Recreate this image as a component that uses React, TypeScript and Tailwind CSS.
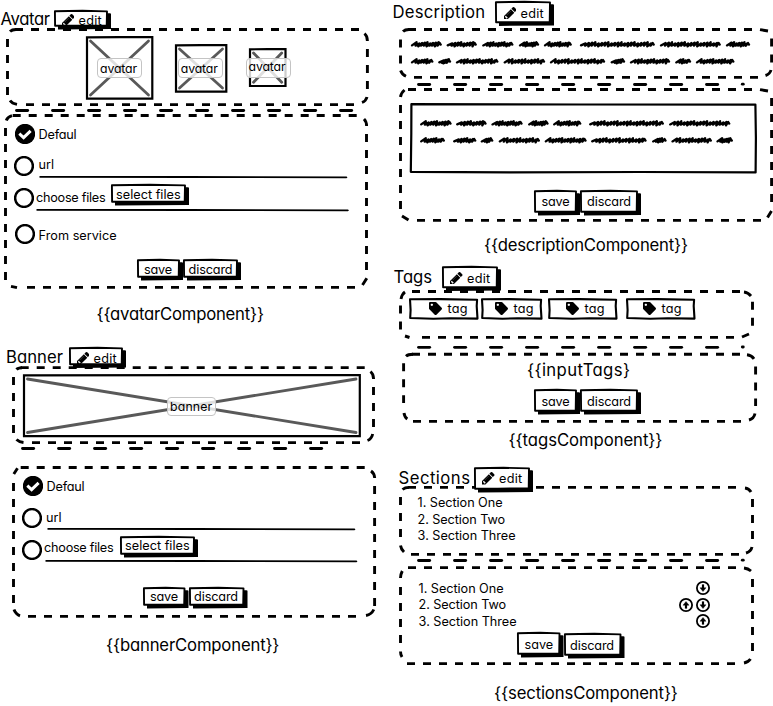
import { useLayoutEffect, useRef, type ReactNode } from "react";
import { FaTag } from "react-icons/fa";

type Seg = [number, number];
type FrameShape = {
  l: number; t: number; r: number; b: number;
  top: Seg; right: Seg; bottom: Seg; left: Seg;
  corners: string;
};

/* Text spread evenly over the width its class gives it. */
function Label({ children, className }: { children: string; className: string }) {
  const box = useRef<HTMLSpanElement>(null);
  const ink = useRef<HTMLSpanElement>(null);
  useLayoutEffect(() => {
    if (!box.current || !ink.current) return;
    ink.current.style.letterSpacing = "0px";
    const room = box.current.getBoundingClientRect().width;
    const natural = ink.current.getBoundingClientRect().width;
    ink.current.style.letterSpacing = `${(room - natural + 1) / Math.max(1, children.length - 1)}px`;
  }, [children]);
  return (
    <span ref={box} className={`block shrink-0 whitespace-nowrap ${className}`}>
      <span ref={ink}>{children}</span>
    </span>
  );
}

const SMALL = "h-[12px] text-[12.7px] leading-[13.2px] -indent-[0.4px]";
const CHIP = "h-[12px] text-[12.3px] leading-[13px] -indent-[0.4px]";
const BIG = "h-[16px] text-[16.7px] leading-[16px] -indent-[1px]";

/* Dashed hand-drawn frame behind a panel. */
function Panel({ x, y, shape, className, children }: { x: number; y: number; shape: FrameShape; className: string; children: ReactNode }) {
  const s = shape;
  return (
    <section className={`relative shrink-0 ${className}`}>
      <svg className="pointer-events-none absolute inset-0 h-full w-full overflow-visible" fill="none" stroke="#000" strokeWidth="2.9">
        <g transform={`translate(${-x} ${-y})`}>
          <g strokeDasharray="8 8">
            <path d={`M${s.top[0]} ${s.t}H${s.top[1]}`} />
            <path d={`M${s.bottom[0]} ${s.b}H${s.bottom[1]}`} />
            <path d={`M${s.l} ${s.left[0]}V${s.left[1]}`} />
            <path d={`M${s.r} ${s.right[0]}V${s.right[1]}`} />
          </g>
          <path d={s.corners} />
        </g>
      </svg>
      {children}
    </section>
  );
}

function Divider({ start, count, y, dot, className }: { start: number; count: number; y: number; dot?: boolean; className: string }) {
  return (
    <svg className={`block w-full shrink-0 overflow-visible ${className}`} stroke="#000" strokeWidth="2.8" strokeLinecap="round">
      {Array.from({ length: count }, (_, i) => (
        <path key={i} d={`M${start + 1.5 + i * 36} ${y}h11.2`} />
      ))}
      {dot && <path d={`M${start + 325.3} ${y - 0.3}h1`} />}
    </svg>
  );
}

function Button({ w, h, className, children }: { w: number; h: number; className: string; children: ReactNode }) {
  return (
    <button className={`relative flex shrink-0 items-start ${className}`}>
      <svg className="absolute inset-0 h-full w-full overflow-visible">
        <path d={`M3.8 3.2H${w - 1}l1 .6V${h}L4 ${h + 0.4}z`} />
        <path d={`M.9 1.2L${w * 0.5} .8L${w - 4} 1.4L${w - 4.3} ${h - 3.6}L${w * 0.4} ${h - 3.4}L1.1 ${h - 3.2}z`} fill="#fff" stroke="#000" strokeWidth="1.9" strokeLinejoin="round" />
      </svg>
      {children}
    </button>
  );
}

function EditButton({ w, h, className }: { w: number; h: number; className: string }) {
  return (
    <Button w={w} h={h} className={className}>
      <svg viewBox="128 149 1515 1515" className="relative size-[12.5px] shrink-0">
        <path d="M491 1536l91-91-235-235-91 91v107h128v128h107zM960 416l416 416-832 832h-416v-416zM1643 512q0 53-37 90l-166 166-416-416 166-165q36-38 90-38 53 0 91 38l235 234q37 39 37 91z" />
        <path d="M440 1140L960 620" stroke="#8a8a8a" strokeWidth="50" />
      </svg>
      <Label className={`${SMALL} relative ml-[5px] w-[22px]`}>edit</Label>
    </Button>
  );
}

function Radio({ checked, className }: { checked?: boolean; className: string }) {
  return (
    <svg viewBox="0 0 20 20" className={`size-[20px] shrink-0 ${className}`} fill="none">
      {checked ? (
        <>
          <circle cx="10" cy="10" r="10.2" fill="#000" />
          <path d="M4.3 9.7L8.6 13.6L15.6 6.8" stroke="#fff" strokeWidth="3" />
        </>
      ) : (
        <circle cx="10" cy="10" r="8.9" stroke="#000" strokeWidth="2.5" />
      )}
    </svg>
  );
}

function Rule({ className }: { className: string }) {
  return (
    <svg className={`block h-[2px] w-full shrink-0 overflow-visible ${className}`} viewBox="0 0 310 2" preserveAspectRatio="none">
      <path d="M.5 .1L150 0L309 .4L310 1.3L309 2.2L150 1.9L.5 1.7z" />
    </svg>
  );
}

function ImageBox({ w, h, className, chip, text, children }: { w: number; h: number; className: string; chip: string; text: string; children: string }) {
  return (
    <div className={`relative shrink-0 ${className}`}>
      <svg className="absolute inset-0 h-full w-full overflow-visible" fill="none">
        <path d={`M4.5 5L${w - 5} ${h - 5}M${w - 5} 5L4.5 ${h - 5}`} stroke="#595959" strokeWidth="2.8" strokeLinecap="round" />
        <path d={`M1 1.3L${w * 0.5} 1.1L${w - 1.2} 1V${h - 1.3}H1z`} stroke="#000" strokeWidth="2.2" />
      </svg>
      <div className={`absolute flex rounded-[4px] border border-[#c4c4c4] bg-white/80 ${chip}`}>
        <Label className={`${CHIP} ${text}`}>{children}</Label>
      </div>
    </div>
  );
}

/* Scribbled words standing for body copy. */
function Scribble({ x, words, className }: { x: number; words: Seg[]; className: string }) {
  const path = words
    .map(([a, b], k) => {
      const n = Math.max(3, Math.round((b - a) / 3.6));
      const step = (b - a - 6) / n;
      let d = `M${a - x + 1} 5.4`;
      for (let i = 0; i < n; i++) {
        const px = a - x + 1 + i * step;
        const lift = ((i * 7 + k * 3) % 4) * 0.4;
        d += `L${px + 4.6} ${2.2 + lift}L${px + step + 0.8} ${5.7 + (i % 3 === 1 ? 0.7 : 0)}`;
      }
      return d + `L${b - x - 2} 3L${b - x - 1} 4.6`;
    })
    .join("");
  return (
    <svg className={`block h-[8px] w-full shrink-0 overflow-visible ${className}`} fill="none" stroke="#000" strokeWidth="2.3" strokeLinejoin="round" strokeLinecap="round">
      <path d={path} />
    </svg>
  );
}

function ArrowCircle({ up }: { up?: boolean }) {
  return (
    <svg viewBox="0 0 14 14" className="-mt-[0.6px] size-[14px]" fill="none" stroke="#000">
      <circle cx="7" cy="7" r="6.1" strokeWidth="1.8" />
      <g transform={up ? "rotate(180 7 7)" : undefined}>
        <path d="M7 3.4V8" strokeWidth="2.2" />
        <path d="M4 6.8H10L7 10.5z" fill="#000" strokeWidth="0.4" />
      </g>
    </svg>
  );
}

function TagBox({ w, className }: { w: number; className: string }) {
  return (
    <div className={`relative flex h-[22px] shrink-0 items-start pt-[4.5px] ${className}`}>
      <svg className="absolute inset-0 h-full w-full overflow-visible" fill="none" stroke="#000" strokeWidth="2.1" strokeLinejoin="round">
        <path d={`M1 1.2L${w * 0.45} 1.1L${w - 1.4} 1.8L${w - 1.8} 8L${w - 1} 20.6L${w * 0.6} 20.2L${w * 0.35} 20.7L1.2 20L1.6 12z`} />
      </svg>
      <FaTag className="size-[13px] shrink-0" />
      <Label className={`${SMALL} ml-[6px] w-[19px]`}>tag</Label>
    </div>
  );
}

const avatarView: FrameShape = { l: 7.5, t: 29.5, r: 367.4, b: 104.6, top: [15, 359], right: [49, 90], bottom: [26, 354], left: [39, 95], corners: "M10 31.5Q12 29.5 16 29.5M364.5 33.5Q367.4 36 367.4 41M10 100.5Q12 103.5 17 104.4M362 102.5Q366 101 367 97" };
const avatarForm: FrameShape = { l: 5.5, t: 115.5, r: 366.5, b: 287.4, top: [12.7, 357], right: [134, 270], bottom: [27, 355], left: [128, 280], corners: "M6.3 120.5Q7.5 117 12 115.7M364 119Q366.5 121.5 366.6 126M11 286.3L17 287.6M362.5 285L366.8 278.3" };
const bannerView: FrameShape = { l: 13.5, t: 367.6, r: 373.5, b: 442.6, top: [20.7, 365], right: [387, 427], bottom: [32, 360], left: [377, 433], corners: "M16.5 369.5Q18 367.8 22 367.7M370.5 371.5Q373.5 374 373.6 379M16.5 439.5Q19 442 23.5 442.5M367.5 440.5Q371.5 439 372.7 434" };
const bannerForm: FrameShape = { l: 13.5, t: 467.5, r: 374.6, b: 616.4, top: [20.7, 365], right: [486, 606], bottom: [28, 364], left: [483, 603], corners: "M13.8 474L17.5 468.3M371 471Q374.5 473.5 374.7 478M14 609.5Q15.5 614 20 615.8M366 615.5Q371.5 614.5 373.8 609.5" };
const descView: FrameShape = { l: 400.5, t: 29.5, r: 771.6, b: 77.4, top: [408, 752], right: [38.5, 63], bottom: [414, 758], left: [39.5, 63.5], corners: "M403 31.5Q405 29.5 409 29.5M760 29.6L768 31M400.6 70.5Q402 74.5 406 76.3M765.5 75.5Q770 74 771 70" };
const descForm: FrameShape = { l: 400.5, t: 89.5, r: 771.6, b: 220.4, top: [408, 752], right: [98, 202], bottom: [417, 761], left: [105, 209], corners: "M400.5 97Q401 93 404.5 90M760 89.6L768 91M402 216L408.5 220M767.5 217.5L771.5 211" };
const tagView: FrameShape = { l: 400.5, t: 291.5, r: 752.5, b: 337.4, top: [412, 740], right: [301.7, 326], bottom: [422, 734], left: [305.5, 330], corners: "M401 299Q402 294 405 292M744 292Q748 292.5 751 296M405 336L409.5 337.5M742 337L749 334" };
const tagForm: FrameShape = { l: 403.6, t: 354.3, r: 755.6, b: 421.4, top: [412, 740], right: [366.5, 406], bottom: [413, 741], left: [363.3, 403], corners: "M406 356.2Q408 354.3 413 354.3M747 354.8Q751.5 355.3 754 358.8M404 413Q404.5 417 407.3 419M749 420Q754 418.5 755 413.5" };
const sectionView: FrameShape = { l: 400.5, t: 487.4, r: 752.5, b: 554.4, top: [408, 736], right: [499, 539], bottom: [411, 739], left: [497, 537], corners: "M402.5 489.5Q405 487.4 409 487.4M745 488Q749 488.5 751 492M400.5 545.5Q401 549 404 552M746 553Q751 551.5 752 547" };
const sectionForm: FrameShape = { l: 400.5, t: 567.6, r: 752.5, b: 663.6, top: [408, 736], right: [579, 651], bottom: [407, 735], left: [587, 643], corners: "M400.5 578Q400.7 574 402.3 571M744 568Q748 568.5 751 571M400.5 651.5Q400.5 654.5 402 657M744 663Q748.5 662 750.5 659" };

export default function App() {
  return (
    <main className="flex h-[706px] w-[773px] overflow-hidden bg-white font-['Inter','Noto_Sans',sans-serif] text-black [font-feature-settings:'cv11','calt'_0]">
      <div className="flex w-[390px] shrink-0 flex-col">
        <header className="relative z-10 flex h-[28px] shrink-0 items-start">
          <Label className={`${BIG} mt-[11px] ml-[1.5px] w-[48.5px]`}>Avatar</Label>
          <EditButton w={57} h={19} className="mt-[10px] ml-[4px] h-[19px] w-[57px] pt-[3.5px] pl-[7.5px]" />
        </header>
        <Panel x={0} y={28} shape={avatarView} className="h-[78px]">
          <div className="flex items-start">
            <ImageBox w={67.5} h={64} className="mt-[8px] ml-[85.5px] h-[64px] w-[67.5px]" chip="top-[22px] left-[11.5px] h-[20px] w-[45px]" text="mt-[2.5px] ml-[2.5px] w-[36px]">avatar</ImageBox>
            <ImageBox w={52.5} h={49} className="mt-[15.5px] ml-[21.5px] h-[49px] w-[52.5px]" chip="top-[14.5px] left-[3.2px] h-[20px] w-[45px]" text="mt-[2.5px] ml-[2.5px] w-[36px]">avatar</ImageBox>
            <ImageBox w={37.7} h={39.3} className="mt-[19.7px] ml-[22.3px] h-[39.3px] w-[37.7px]" chip="top-[10.3px] -left-[3.8px] h-[20px] w-[45px]" text="mt-[1.5px] ml-[2.5px] w-[36px]">avatar</ImageBox>
          </div>
        </Panel>
        <Divider start={15} count={10} y={4.5} className="h-[8px]" />
        <Panel x={0} y={114} shape={avatarForm} className="h-[175px]">
          <div className="flex flex-col pt-[10px]">
            <div className="flex h-[32px] items-start">
              <Radio checked className="ml-[15px]" />
              <Label className={`${SMALL} mt-[4.3px] ml-[4px] w-[37px]`}>Defaul</Label>
            </div>
            <div className="flex h-[32px] items-start">
              <Radio className="ml-[14.3px]" />
              <div className="ml-[4.7px] flex w-[308.5px] flex-col">
                <Label className={`${SMALL} mt-[2.4px] w-[14.5px]`}>url</Label>
                <Rule className="mt-[6.1px]" />
              </div>
            </div>
            <div className="flex h-[36px] items-start">
              <Radio className="ml-[14.3px]" />
              <div className="ml-[2.2px] flex w-[313px] flex-col">
                <div className="flex h-[20.5px] items-start">
                  <Label className={`${SMALL} mt-[2.6px] w-[68.5px]`}>choose files</Label>
                  <Button w={78} h={21} className="-mt-[4.5px] ml-[6px] h-[21px] w-[78px] pt-[4.1px] pl-[5.5px]">
                    <Label className={`${SMALL} relative w-[63.5px]`}>select files</Label>
                  </Button>
                </div>
                <Rule className="" />
              </div>
            </div>
            <div className="flex h-[34.5px] items-start">
              <Radio className="ml-[15px]" />
              <Label className={`${SMALL} mt-[5.3px] ml-[4px] w-[77px]`}>From service</Label>
            </div>
            <div className="ml-[137px] flex items-start">
              <Button w={46} h={21} className="h-[21px] w-[46px] pt-[4.2px] pl-[7.5px]">
                <Label className={`${SMALL} relative w-[27px]`}>save</Label>
              </Button>
              <Button w={58} h={21} className="h-[21px] w-[58px] pt-[4.2px] pl-[6px]">
                <Label className={`${SMALL} relative w-[43px]`}>discard</Label>
              </Button>
            </div>
          </div>
        </Panel>
        <div className="h-[58px] shrink-0 pt-[17.2px] pl-[97.5px]">
          <Label className={`${BIG} w-[166.5px]`}>{"{{avatarComponent}}"}</Label>
        </div>

        <header className="relative z-10 flex h-[19px] shrink-0 items-start">
          <Label className={`${BIG} mt-[1.5px] ml-[7px] w-[56px]`}>Banner</Label>
          <EditButton w={57} h={20.5} className="ml-[6px] h-[20.5px] w-[57px] pt-[4.5px] pl-[7.5px]" />
        </header>
        <Panel x={0} y={366} shape={bannerView} className="h-[78px]">
          <div className="flex items-start">
            <ImageBox w={338} h={63.5} className="mt-[8px] ml-[22.5px] h-[63.5px] w-[338px]" chip="top-[22.5px] left-[144.5px] h-[19px] w-[48.5px]" text="mt-[2.3px] ml-[2.5px] w-[41px]">banner</ImageBox>
          </div>
        </Panel>
        <Divider start={21} count={9} y={4.5} className="h-[22px]" />
        <Panel x={0} y={466} shape={bannerForm} className="h-[152px]">
          <div className="flex flex-col pt-[9.5px]">
            <div className="flex h-[32.5px] items-start">
              <Radio checked className="ml-[23px]" />
              <Label className={`${SMALL} mt-[4.6px] ml-[4px] w-[37px]`}>Defaul</Label>
            </div>
            <div className="flex h-[32px] items-start">
              <Radio className="ml-[22px]" />
              <div className="ml-[4.5px] flex w-[308.5px] flex-col">
                <Label className={`${SMALL} mt-[2.6px] w-[14.5px]`}>url</Label>
                <Rule className="mt-[5.9px]" />
              </div>
            </div>
            <div className="flex h-[46.5px] items-start">
              <Radio className="ml-[22px]" />
              <div className="ml-[2.5px] flex w-[312.5px] flex-col">
                <div className="flex h-[19.5px] items-start">
                  <Label className={`${SMALL} mt-[1.4px] w-[68.5px]`}>choose files</Label>
                  <Button w={78} h={21} className="-mt-[4.5px] ml-[7px] h-[21px] w-[78px] pt-[3.7px] pl-[5.5px]">
                    <Label className={`${SMALL} relative w-[63.5px]`}>select files</Label>
                  </Button>
                </div>
                <Rule className="" />
              </div>
            </div>
            <div className="ml-[143px] flex items-start">
              <Button w={45.5} h={21} className="h-[21px] w-[45.5px] pt-[3.8px] pl-[7.5px]">
                <Label className={`${SMALL} relative w-[27px]`}>save</Label>
              </Button>
              <Button w={58.5} h={21} className="h-[21px] w-[58.5px] pt-[3.8px] pl-[6px]">
                <Label className={`${SMALL} relative w-[43px]`}>discard</Label>
              </Button>
            </div>
          </div>
        </Panel>
        <div className="shrink-0 pt-[19.2px] pl-[107px]">
          <Label className={`${BIG} w-[172.5px]`}>{"{{bannerComponent}}"}</Label>
        </div>
      </div>

      <div className="flex w-[383px] shrink-0 flex-col">
        <header className="relative z-10 flex h-[28px] shrink-0 items-start">
          <Label className={`${BIG} mt-[3.5px] ml-[3.5px] w-[91.5px]`}>Description</Label>
          <EditButton w={59} h={24.5} className="mt-[1px] ml-[10px] h-[24.5px] w-[59px] pt-[5.6px] pl-[8.5px]" />
        </header>
        <Panel x={390} y={28} shape={descView} className="h-[51px]">
          <div className="flex flex-col pt-[11.5px]">
            <Scribble x={390} className="" words={[[411, 441.7], [446.7, 476.7], [482.3, 513.3], [519, 539], [544, 571.7], [580, 654.7], [660, 720.7], [726, 750]]} />
            <Scribble x={390} className="mt-[9.5px]" words={[[411, 433.3], [438.3, 451], [456, 498.3], [503.7, 545], [550, 605], [610.7, 625], [630, 670], [675.3, 691], [696, 734.3]]} />
          </div>
        </Panel>
        <Divider start={27} count={9} y={5.5} dot className="h-[9px]" />
        <Panel x={390} y={88} shape={descForm} className="h-[134px]">
          <div className="flex flex-col pt-[15px]">
            <div className="relative ml-[19.5px] flex h-[70.5px] w-[347px] flex-col pt-[15.5px]">
              <svg className="absolute inset-0 h-full w-full overflow-visible" fill="none" stroke="#000" strokeWidth="2.2" strokeLinejoin="round">
                <path d="M1.4 1.2L170 1.5L345.4 1.6L345.9 35L345.6 69.4L230 69L100 69.4L.8 68.8L1.3 30z" />
              </svg>
              <Scribble x={409.5} className="" words={[[419.7, 451], [455.7, 486], [491, 522], [527.7, 548], [552.7, 580.7], [588.7, 663.3], [668.7, 729.7]]} />
              <Scribble x={409.5} className="mt-[9px]" words={[[419.7, 444.3], [452.7, 475.7], [480.3, 492.7], [498.3, 539.3], [544.3, 586], [590.7, 646], [651.7, 666], [671, 711.3], [716, 732.3]]} />
            </div>
            <div className="mt-[16px] ml-[144px] flex items-start">
              <Button w={46} h={25} className="h-[25px] w-[46px] pt-[5.9px] pl-[8px]">
                <Label className={`${SMALL} relative w-[27px]`}>save</Label>
              </Button>
              <Button w={61} h={25} className="h-[25px] w-[61px] pt-[5.9px] pl-[7.5px]">
                <Label className={`${SMALL} relative w-[43px]`}>discard</Label>
              </Button>
            </div>
          </div>
        </Panel>
        <div className="h-[43px] shrink-0 pt-[14.9px] pl-[95px]">
          <Label className={`${BIG} w-[203px]`}>{"{{descriptionComponent}}"}</Label>
        </div>

        <header className="relative z-10 flex h-[25px] shrink-0 items-start">
          <Label className={`${BIG} mt-[3.9px] ml-[4.5px] w-[37.5px]`}>Tags</Label>
          <EditButton w={59} h={24.5} className="mt-[0.5px] ml-[10px] h-[24.5px] w-[59px] pt-[6px] pl-[8px]" />
        </header>
        <Panel x={390} y={290} shape={tagView} className="h-[49px]">
          <div className="flex items-start pt-[7.5px] pl-[19px]">
            <TagBox w={69.5} className="w-[69.5px] pl-[20px]" />
            <TagBox w={61.5} className="ml-[2px] w-[61.5px] pl-[14.5px]" />
            <TagBox w={69.5} className="ml-[6px] w-[69.5px] pl-[18px]" />
            <TagBox w={69.5} className="ml-[8px] w-[69.5px] pl-[17.5px]" />
          </div>
        </Panel>
        <Divider start={27} count={9} y={8.3} dot className="h-[13px]" />
        <Panel x={390} y={352} shape={tagForm} className="h-[71px]">
          <div className="flex flex-col pt-[9.9px]">
            <Label className={`${BIG} ml-[138px] w-[102px]`}>{"{{inputTags}"}</Label>
            <div className="mt-[11.1px] ml-[144px] flex items-start">
              <Button w={46} h={25} className="h-[25px] w-[46px] pt-[5.9px] pl-[8px]">
                <Label className={`${SMALL} relative w-[27px]`}>save</Label>
              </Button>
              <Button w={61} h={25} className="h-[25px] w-[61px] pt-[6.3px] pl-[7.5px]">
                <Label className={`${SMALL} relative w-[43px]`}>discard</Label>
              </Button>
            </div>
          </div>
        </Panel>
        <div className="h-[44px] shrink-0 pt-[9.2px] pl-[119.5px]">
          <Label className={`${BIG} w-[153px]`}>{"{{tagsComponent}}"}</Label>
        </div>

        <header className="relative z-10 flex h-[19px] shrink-0 items-start">
          <Label className={`${BIG} mt-[2.5px] ml-[9.5px] w-[70.5px]`}>Sections</Label>
          <EditButton w={59} h={25} className="-mt-[0.5px] ml-[4px] h-[25px] w-[59px] pt-[5.9px] pl-[8px]" />
        </header>
        <Panel x={390} y={486} shape={sectionView} className="h-[70px]">
          <div className="flex flex-col gap-[4.4px] pt-[10.3px] pl-[28px]">
            <Label className={`${SMALL} w-[84px]`}>1. Section One</Label>
            <Label className={`${SMALL} w-[86.5px]`}>2. Section Two</Label>
            <Label className={`${SMALL} w-[97px]`}>3. Section Three</Label>
          </div>
        </Panel>
        <Divider start={27} count={9} y={4.5} dot className="h-[10px]" />
        <Panel x={390} y={566} shape={sectionForm} className="h-[99px]">
          <div className="flex flex-col pt-[15.6px]">
            <div className="ml-[29px] flex h-[16.5px] w-[291px] items-start justify-between">
              <Label className={`${SMALL} w-[84px]`}>1. Section One</Label>
              <ArrowCircle />
            </div>
            <div className="ml-[29px] flex h-[16.5px] w-[291px] items-start justify-between">
              <Label className={`${SMALL} w-[86.5px]`}>2. Section Two</Label>
              <div className="flex gap-[3px]">
                <ArrowCircle up />
                <ArrowCircle />
              </div>
            </div>
            <div className="ml-[29px] flex h-[16.5px] w-[291px] items-start justify-between">
              <Label className={`${SMALL} w-[97px]`}>3. Section Three</Label>
              <ArrowCircle up />
            </div>
            <div className="mt-[1.4px] ml-[127px] flex items-start">
              <Button w={46.5} h={25} className="h-[25px] w-[46.5px] pt-[5.9px] pl-[8px]">
                <Label className={`${SMALL} relative w-[27.5px]`}>save</Label>
              </Button>
              <Button w={60.5} h={25} className="mt-[1px] h-[25px] w-[60.5px] pt-[5.6px] pl-[7px]">
                <Label className={`${SMALL} relative w-[43px]`}>discard</Label>
              </Button>
            </div>
          </div>
        </Panel>
        <div className="shrink-0 pt-[19.9px] pl-[105px]">
          <Label className={`${BIG} w-[183px]`}>{"{{sectionsComponent}}"}</Label>
        </div>
      </div>
    </main>
  );
}
